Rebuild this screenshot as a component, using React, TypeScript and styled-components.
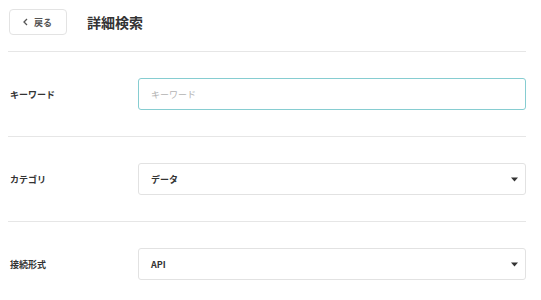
import React from "react";
import styled, { createGlobalStyle } from "styled-components";

const GlobalStyle = createGlobalStyle`
  body {
    margin: 8px 15px 0 8px;
    background: #ffffff;
    font-family: "Noto Sans CJK JP", "Noto Sans", sans-serif;
    color: #333333;
  }
`;

const Page = styled.div`
  display: flex;
  flex-direction: column;
`;

const Header = styled.header`
  display: flex;
  align-items: center;
  gap: 20px;
  padding: 1px 0 16px 1px;
  border-bottom: 1px solid #e6e6e6;
`;

const BackButton = styled.button`
  display: flex;
  align-items: center;
  gap: 6px;
  width: 58px;
  height: 26px;
  padding: 0 0 0 13px;
  border: 1px solid #e3e3e3;
  border-radius: 4px;
  background: #ffffff;
  font-family: inherit;
  font-size: 9px;
  font-weight: 700;
  color: #555555;
`;

const Title = styled.h1`
  margin: 0;
  font-size: 14px;
  font-weight: 700;
  color: #333333;
`;

const Row = styled.div`
  display: grid;
  grid-template-columns: 128px 1fr;
  align-items: center;
  padding: 26px 0 26px 2px;
  border-bottom: 1px solid #e6e6e6;
`;

const Label = styled.label`
  font-size: 9px;
  font-weight: 700;
  color: #333333;
`;

const TextInput = styled.input<{ $focused?: boolean }>`
  box-sizing: border-box;
  width: 100%;
  height: 32px;
  padding: 0 12px;
  border: 1px solid ${(p) => (p.$focused ? "#86cdd1" : "#e2e2e2")};
  border-radius: 3px;
  font-family: inherit;
  font-size: 9px;
  outline: none;
  &::placeholder {
    color: #b3b3b3;
  }
`;

const SelectBox = styled.div`
  box-sizing: border-box;
  display: flex;
  align-items: center;
  justify-content: space-between;
  height: 32px;
  padding: 0 7px 0 12px;
  border: 1px solid #e2e2e2;
  border-radius: 3px;
  font-size: 9px;
  font-weight: 700;
  color: #333333;
`;

const Caret = () => (
  <svg width="7" height="5" viewBox="0 0 7 5">
    <path d="M0 0.5h7L3.5 4.5z" fill="#333" />
  </svg>
);

const Chevron = () => (
  <svg width="5" height="8" viewBox="0 0 5 8">
    <path d="M4 1L1 4l3 3" fill="none" stroke="#555" strokeWidth="1.3" />
  </svg>
);

const fields = [
  { label: "カテゴリ", value: "データ" },
  { label: "接続形式", value: "API" },
];

export default function App() {
  return (
    <>
      <GlobalStyle />
      <Page>
        <Header>
          <BackButton>
            <Chevron />
            戻る
          </BackButton>
          <Title>詳細検索</Title>
        </Header>
        <Row>
          <Label>キーワード</Label>
          <TextInput $focused placeholder="キーワード" />
        </Row>
        {fields.map((f) => (
          <Row key={f.label}>
            <Label>{f.label}</Label>
            <SelectBox>
              {f.value}
              <Caret />
            </SelectBox>
          </Row>
        ))}
      </Page>
    </>
  );
}
